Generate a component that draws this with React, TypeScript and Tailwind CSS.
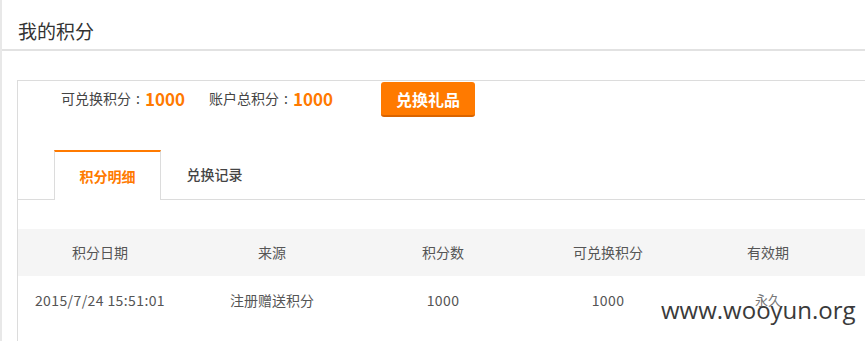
import React from "react";

const font = { fontFamily: '"Noto Sans CJK SC", "Noto Sans", sans-serif' };

export default function App() {
  const cols = "grid grid-cols-[164px_180px_162px_168px_152px]";
  return (
    <div className="relative w-[865px] h-[341px] overflow-hidden bg-white border-l-2 border-[#e8e8e8] text-[#333]" style={font}>
      <div className="pl-4 pt-[16px] h-[51px] border-b-2 border-[#e2e2e2] text-[19px] leading-[30px] text-[#333]">
        我的积分
      </div>
      <div className="mt-[29px] ml-[15px] border-t border-l border-[#dcdcdc]">
        <div className="flex items-center h-[35px]">
          <div className="ml-[43px] text-[14px] text-[#444] flex items-center">
            可兑换积分<span className="mx-[5px]">:</span>
            <span className="text-[17px] font-bold text-[#ff7a00]">1000</span>
          </div>
          <div className="ml-[24px] text-[14px] text-[#444] flex items-center">
            账户总积分<span className="mx-[5px]">:</span>
            <span className="text-[17px] font-bold text-[#ff7a00]">1000</span>
          </div>
          <button className="ml-[48px] mt-[2px] w-[94px] h-[35px] rounded-[3px] bg-[#ff7a00] border-b-2 border-[#d96400] text-white text-[16px] font-bold leading-none">
            兑换礼品
          </button>
        </div>
        <div className="mt-[34px] flex items-end h-[50px] border-b border-[#dcdcdc]">
          <div className="ml-[36px] w-[107px] h-[50px] -mb-px bg-white border-t-2 border-t-[#ff7a00] border-x border-x-[#dcdcdc] flex items-center justify-center text-[14px] font-bold text-[#ff7a00]">
            积分明细
          </div>
          <div className="w-[107px] h-[49px] flex items-center justify-center text-[14px] font-medium text-[#444]">
            兑换记录
          </div>
        </div>
        <div className="mt-[29px] bg-[#f5f5f5] h-[47px]">
          <div className={`${cols} h-full items-center text-[14px] text-[#555] text-center`}>
            <div>积分日期</div>
            <div>来源</div>
            <div>积分数</div>
            <div>可兑换积分</div>
            <div>有效期</div>
          </div>
        </div>
        <div className={`${cols} h-[48px] items-center text-[14px] text-[#555] text-center`}>
          <div className="tracking-[0.4px]">2015/7/24 15:51:01</div>
          <div>注册赠送积分</div>
          <div className="tracking-[0.4px]">1000</div>
          <div className="tracking-[0.4px]">1000</div>
          <div className="text-[13px] text-[#777]">永久</div>
        </div>
        <div className="h-[20px]" />
      </div>
      <div
        className="absolute left-[659px] top-[298px] text-[24px] text-[#3a3a3a] leading-none"
        style={{ fontFamily: '"Open Sans", sans-serif' }}
      >
        www.wooyun.org
      </div>
    </div>
  );
}
